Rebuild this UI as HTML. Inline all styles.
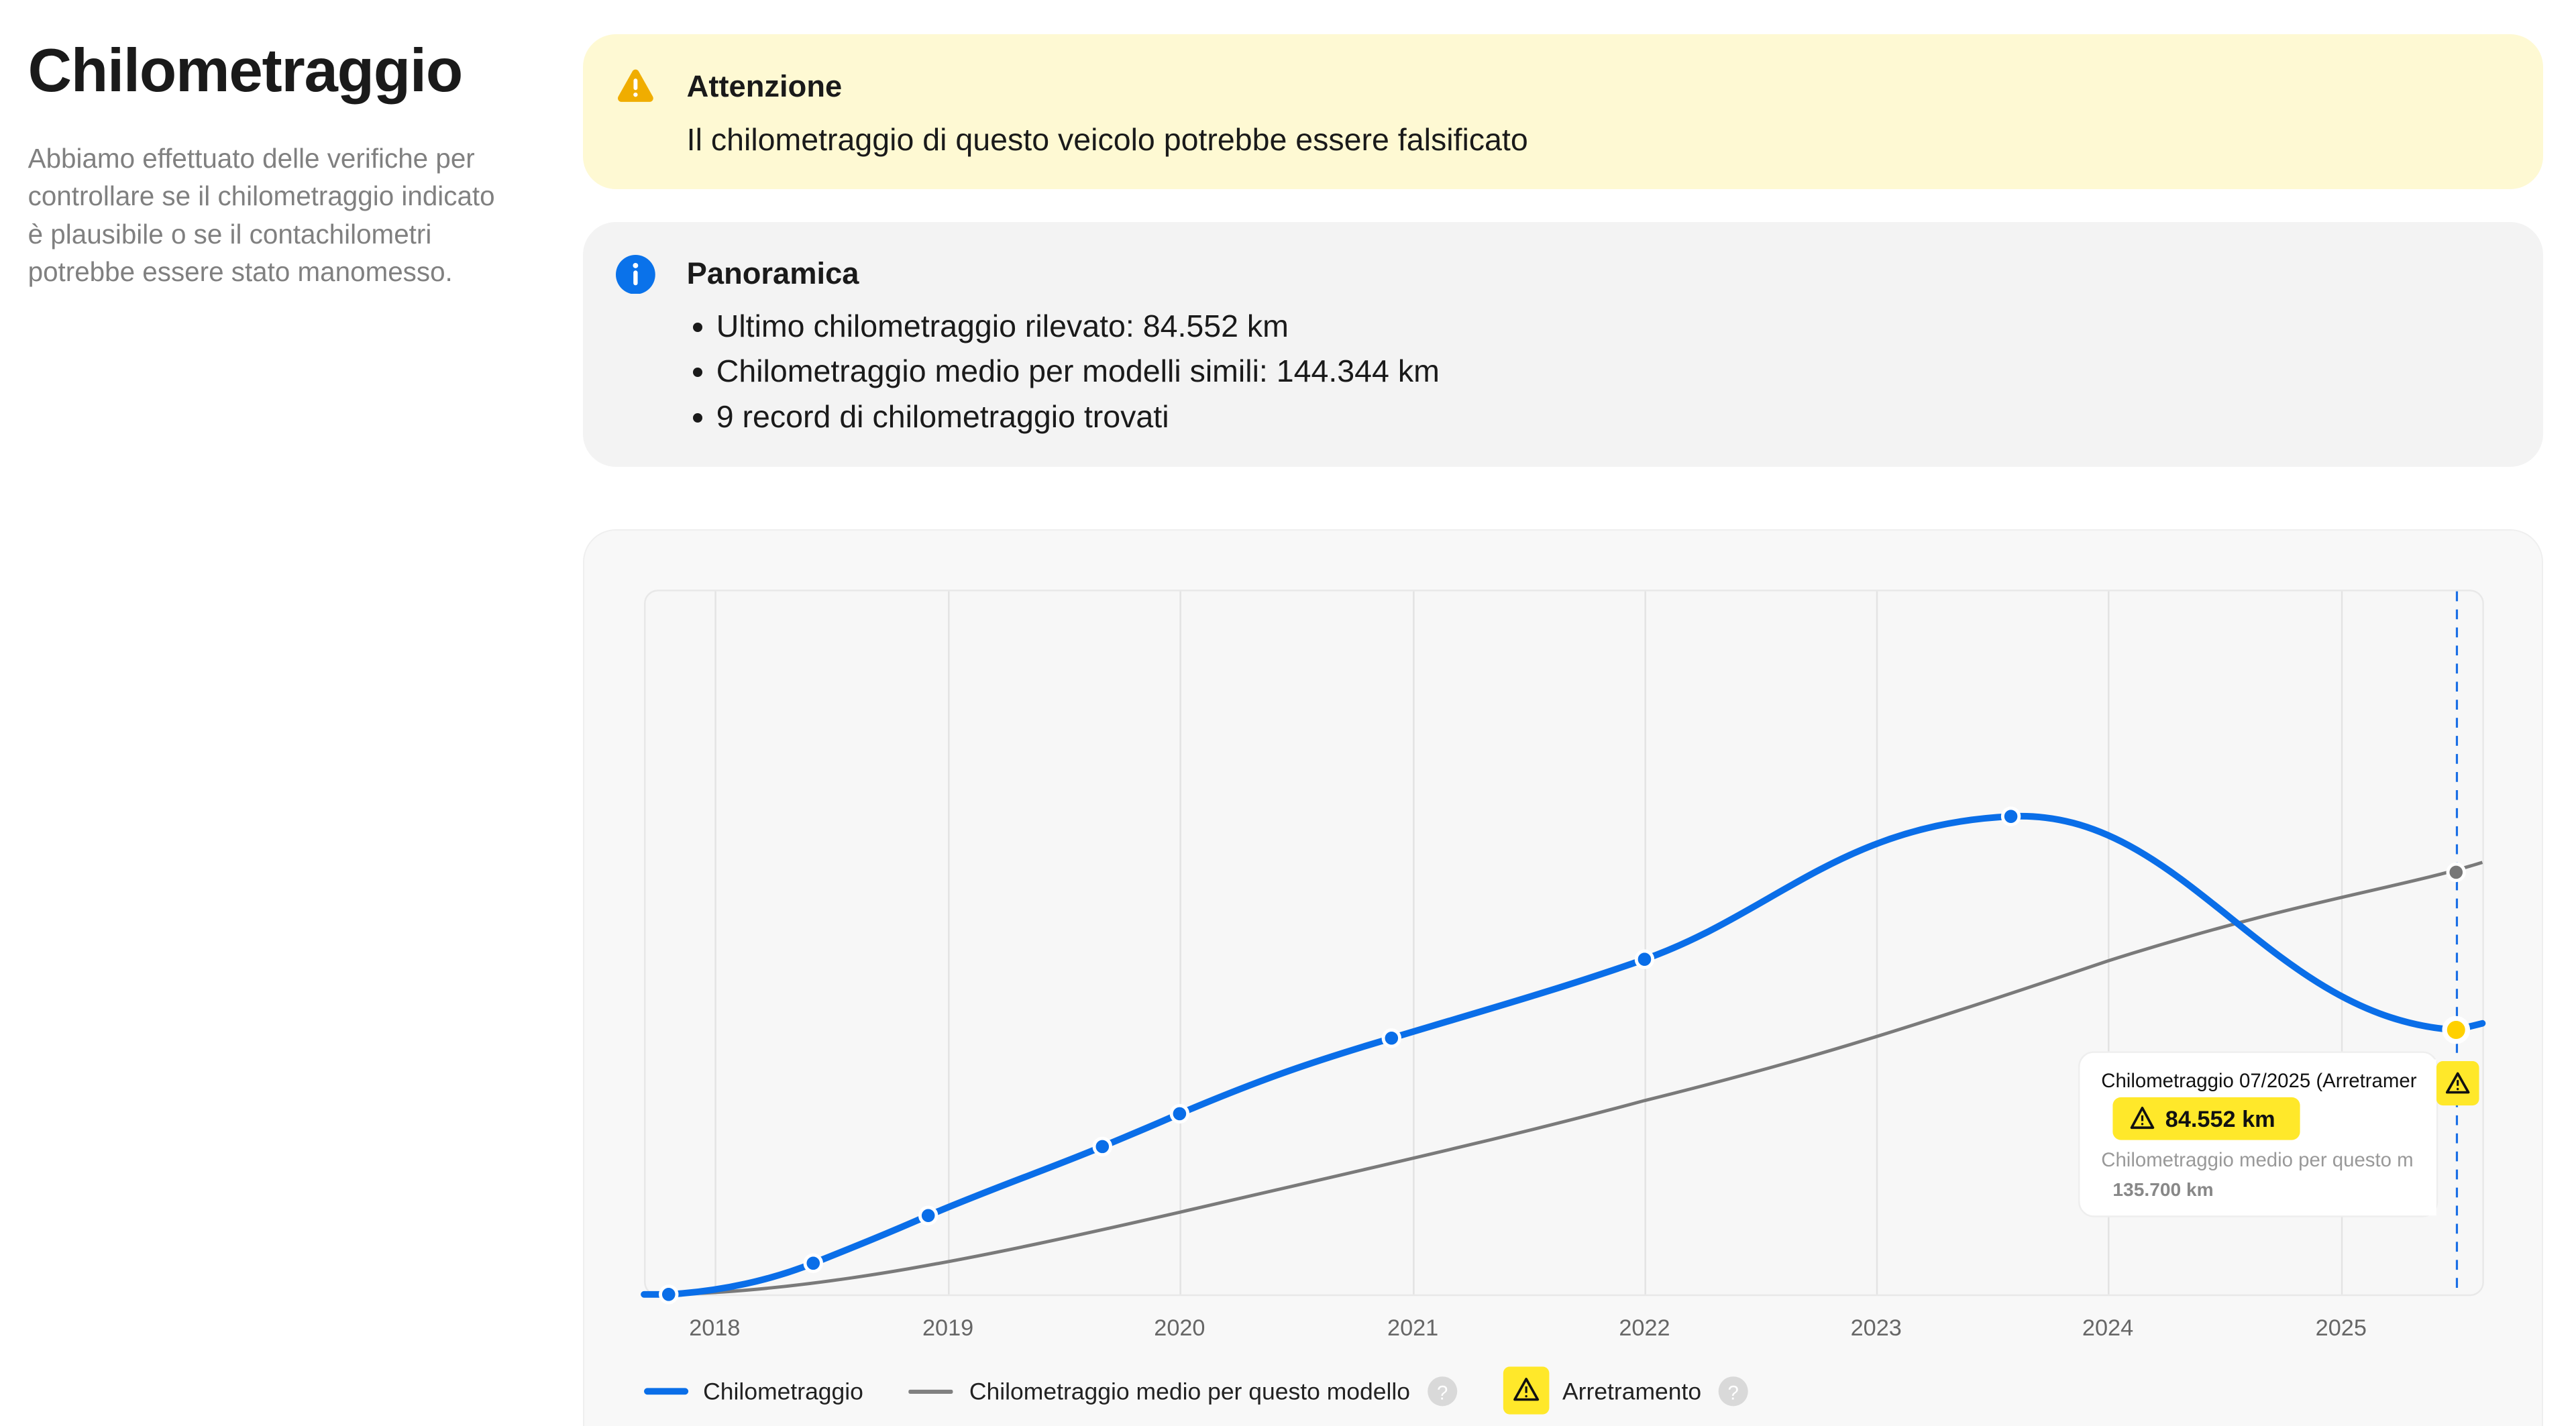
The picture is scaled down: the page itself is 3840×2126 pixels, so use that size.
<!DOCTYPE html>
<html><head><meta charset="utf-8">
<style>
html{margin:0;padding:0;background:#fff;overflow:hidden;}
body{margin:0;padding:0;background:#fff;width:1568px;height:868px;overflow:hidden;zoom:2.449;font-family:"Liberation Sans",sans-serif;color:#1a1a1a;position:relative;}
.abs{position:absolute;}
h1{position:absolute;left:17px;top:22px;margin:0;font-size:37px;font-weight:700;letter-spacing:-0.5px;}
.desc{left:17px;top:85px;width:292px;font-size:16.5px;line-height:23px;color:#808080;}
.card{position:absolute;left:355px;width:1193px;border-radius:20px;}
.warn{top:21px;height:94px;background:#fef9d3;}
.info{top:135px;height:149px;background:#f3f3f3;}
.chart{top:322px;height:546px;background:#f8f8f8;border:1px solid #efefef;border-bottom:none;border-radius:20px 20px 0 0;box-sizing:border-box;}
.t{position:absolute;left:63px;font-size:19px;}
.b{font-weight:700;font-size:18.5px;}
ul{position:absolute;left:63px;top:50px;margin:0;padding:0 0 0 18px;font-size:19px;line-height:27.5px;}
</style></head><body>
<h1>Chilometraggio</h1>
<div class="abs desc">Abbiamo effettuato delle verifiche per controllare se il chilometraggio indicato è plausibile o se il contachilometri potrebbe essere stato manomesso.</div>

<div class="card warn">
 <svg class="abs" style="left:20px;top:20px" width="24" height="22" viewBox="0 0 24 22"><path d="M12 1.5c.8 0 1.5.4 1.9 1.1l8.6 15.3c.8 1.5-.2 3.3-1.9 3.3H3.4c-1.7 0-2.7-1.8-1.9-3.3L10.1 2.6c.4-.7 1.1-1.1 1.9-1.1z" fill="#f0ad00"/><rect x="10.8" y="7" width="2.4" height="7" rx="1.2" fill="#fff"/><circle cx="12" cy="16.8" r="1.3" fill="#fff"/></svg>
 <div class="t b" style="top:21px">Attenzione</div>
 <div class="t" style="top:53px">Il chilometraggio di questo veicolo potrebbe essere falsificato</div>
</div>

<div class="card info">
 <svg class="abs" style="left:20px;top:20px" width="24" height="24" viewBox="0 0 24 24"><circle cx="12" cy="12" r="12" fill="#0a72ea"/><circle cx="12" cy="6.5" r="1.6" fill="#fff"/><rect x="10.7" y="9.5" width="2.6" height="9" rx="1.3" fill="#fff"/></svg>
 <div class="t b" style="top:21px">Panoramica</div>
 <ul><li>Ultimo chilometraggio rilevato: 84.552 km</li><li>Chilometraggio medio per modelli simili: 144.344 km</li><li>9 record di chilometraggio trovati</li></ul>
</div>

<div class="card chart"></div>

<svg class="abs" style="left:0;top:0" width="1568" height="868" viewBox="0 0 1568 868">
 <rect x="392.5" y="359.5" width="1119" height="429" rx="8" fill="#f7f7f7" stroke="#e8e8e8"/>
 <g stroke="#e3e3e3" stroke-width="1">
  <line x1="435.5" y1="360" x2="435.5" y2="788"/><line x1="577.5" y1="360" x2="577.5" y2="788"/>
  <line x1="718.5" y1="360" x2="718.5" y2="788"/><line x1="860.5" y1="360" x2="860.5" y2="788"/>
  <line x1="1001.5" y1="360" x2="1001.5" y2="788"/><line x1="1142.5" y1="360" x2="1142.5" y2="788"/>
  <line x1="1283.5" y1="360" x2="1283.5" y2="788"/><line x1="1425.5" y1="360" x2="1425.5" y2="788"/>
 </g>
 <g font-size="14" fill="#666" text-anchor="middle" font-family="Liberation Sans, sans-serif">
  <text x="435" y="813">2018</text><text x="577" y="813">2019</text><text x="718" y="813">2020</text><text x="860" y="813">2021</text><text x="1001" y="813">2022</text><text x="1142" y="813">2023</text><text x="1283" y="813">2024</text><text x="1425" y="813">2025</text>
 </g>
 <line x1="1495.5" y1="360" x2="1495.5" y2="788" stroke="#1a6fe6" stroke-width="1.3" stroke-dasharray="6,5"/>
 <path d="M392 788 L407 788 C500 786 600 765 718 738 C830 712 920 692 1001 670 C1090 648 1150 630 1283 585 C1400 548 1460 541 1511 525" fill="none" stroke="#7a7a7a" stroke-width="2"/>
 <path d="M392 788 L407 788 C440 786 470 779 495 769 C520 759 540 751 565 740 C605 723 640 711 671 698 C690 690 700 686 718 678 C770 656 800 646 847 632 C900 616 950 602 1001 584 C1080 556 1120 502 1224 497 C1330 492 1380 620 1495 627 L1511 623" fill="none" stroke="#0a6ee8" stroke-width="4" stroke-linecap="round"/>
 <g fill="#0a6ee8" stroke="#fff" stroke-width="2">
  <circle cx="407" cy="788" r="5"/><circle cx="495" cy="769" r="5"/><circle cx="565" cy="740" r="5"/><circle cx="671" cy="698" r="5"/><circle cx="718" cy="678" r="5"/><circle cx="847" cy="632" r="5"/><circle cx="1001" cy="584" r="5"/><circle cx="1224" cy="497" r="5"/>
 </g>
 <circle cx="1495" cy="531" r="5" fill="#777" stroke="#fff" stroke-width="2"/>
 <circle cx="1495" cy="627" r="7" fill="#ffd000" stroke="#fff" stroke-width="3"/>
 <rect x="1265.5" y="640.5" width="218" height="100" rx="9" fill="#fff" stroke="#eee"/>
 <rect x="1483" y="646" width="26" height="27" rx="4" fill="#ffe82a"/>
 <path d="M1496 653.5 L1502.5 665 H1489.5 Z" fill="none" stroke="#111" stroke-width="1.5" stroke-linejoin="round"/><line x1="1496" y1="657.5" x2="1496" y2="661" stroke="#111" stroke-width="1.3"/><circle cx="1496" cy="663" r=".7" fill="#111"/>
 <text x="1279" y="662" font-size="12" fill="#111" font-family="Liberation Sans, sans-serif">Chilometraggio 07/2025 (Arretramer</text>
 <rect x="1286" y="668" width="114" height="26" rx="5" fill="#ffe82a"/>
 <path d="M1304 674.5 L1310.5 686.5 H1297.5 Z" fill="none" stroke="#111" stroke-width="1.5" stroke-linejoin="round"/><line x1="1304" y1="679" x2="1304" y2="682.5" stroke="#111" stroke-width="1.3"/><circle cx="1304" cy="684.3" r=".7" fill="#111"/>
 <text x="1318" y="686" font-size="14" font-weight="700" fill="#111" font-family="Liberation Sans, sans-serif">84.552 km</text>
 <text x="1279" y="710" font-size="12" fill="#999" font-family="Liberation Sans, sans-serif">Chilometraggio medio per questo m</text>
 <text x="1286" y="728" font-size="11.5" font-weight="700" fill="#888" font-family="Liberation Sans, sans-serif">135.700 km</text>
 <rect x="1474" y="645" width="9" height="95" fill="#fff"/>
 <rect x="392" y="845" width="27" height="4" rx="2" fill="#0a6ee8"/>
 <text x="428" y="852" font-size="14.5" fill="#222" font-family="Liberation Sans, sans-serif">Chilometraggio</text>
 <rect x="553" y="846" width="27" height="2.5" rx="1" fill="#808080"/>
 <text x="590" y="852" font-size="14.5" fill="#222" font-family="Liberation Sans, sans-serif">Chilometraggio medio per questo modello</text>
 <circle cx="878" cy="847" r="9" fill="#d9d9d9"/><text x="878" y="852" font-size="12" fill="#fff" text-anchor="middle" font-family="Liberation Sans, sans-serif">?</text>
 <rect x="915" y="832" width="28" height="29" rx="4" fill="#ffe82a"/>
 <path d="M929 839.5 L936 852 H922 Z" fill="none" stroke="#111" stroke-width="1.5" stroke-linejoin="round"/><line x1="929" y1="844" x2="929" y2="848" stroke="#111" stroke-width="1.3"/><circle cx="929" cy="850" r=".7" fill="#111"/>
 <text x="951" y="852" font-size="14.5" fill="#222" font-family="Liberation Sans, sans-serif">Arretramento</text>
 <circle cx="1055" cy="847" r="9" fill="#d9d9d9"/><text x="1055" y="852" font-size="12" fill="#fff" text-anchor="middle" font-family="Liberation Sans, sans-serif">?</text>
</svg>
</body></html>
